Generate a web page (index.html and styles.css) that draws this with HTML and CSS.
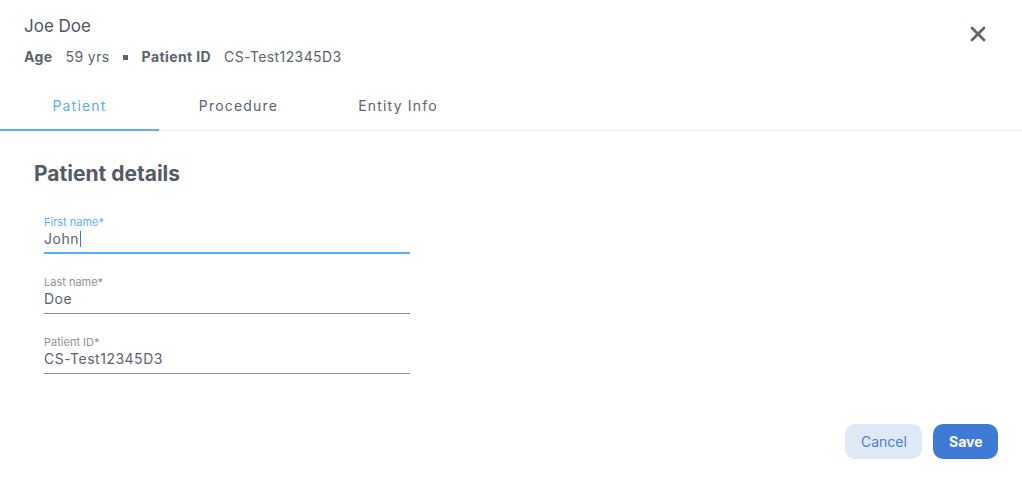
FILE: index.html
```html
<!DOCTYPE html>
<html lang="en">
<head>
<meta charset="utf-8">
<title>Patient</title>
<link rel="stylesheet" href="styles.css">
</head>
<body>
<div class="dialog">
  <header class="header">
    <div class="header-info">
      <div class="name">Joe Doe</div>
      <div class="meta">
        <span class="meta-label">Age</span>
        <span class="meta-value">59 yrs</span>
        <span class="bullet"></span>
        <span class="meta-label">Patient ID</span>
        <span class="meta-value">CS-Test12345D3</span>
      </div>
    </div>
    <button class="close" aria-label="Close">
      <svg width="16" height="16" viewBox="0 0 16 16"><path d="M2 2 L14 14 M14 2 L2 14" stroke="#5f6670" stroke-width="2.8" stroke-linecap="round" fill="none"/></svg>
    </button>
  </header>
  <nav class="tabs">
    <div class="tab active">Patient</div>
    <div class="tab">Procedure</div>
    <div class="tab">Entity Info</div>
  </nav>
  <main class="content">
    <h2 class="section-title">Patient details</h2>
    <div class="fields">
      <div class="field focused">
        <label class="field-label">First name*</label>
        <div class="field-value">John<span class="caret"></span></div>
      </div>
      <div class="field">
        <label class="field-label">Last name*</label>
        <div class="field-value">Doe</div>
      </div>
      <div class="field">
        <label class="field-label">Patient ID*</label>
        <div class="field-value">CS-Test12345D3</div>
      </div>
    </div>
  </main>
  <footer class="actions">
    <button class="btn btn-cancel">Cancel</button>
    <button class="btn btn-save">Save</button>
  </footer>
</div>
</body>
</html>
```
FILE: styles.css
```css
* { box-sizing: border-box; }
html, body { margin: 0; padding: 0; background: #fff; }
body {
  font-family: Inter, "Noto Sans", sans-serif;
  color: #5b636d;
  width: 1022px;
  height: 484px;
  overflow: hidden;
}
.dialog {
  display: flex;
  flex-direction: column;
  height: 484px;
}
.header {
  display: flex;
  justify-content: space-between;
  padding: 15px 36px 0 24px;
}
.name {
  font-size: 17px;
  line-height: 22px;
  color: #4f5660;
}
.meta {
  display: flex;
  align-items: center;
  margin-top: 11px;
  font-size: 14px;
  line-height: 18px;
  letter-spacing: 0.4px;
}
.meta-label { font-weight: 700; color: #5b636d; }
.meta-value { margin-left: 13px; color: #5b636d; }
.bullet {
  width: 5px;
  height: 5px;
  background: #5b636d;
  margin: 0 14px 0 13px;
}
.close {
  border: 0;
  background: none;
  padding: 0;
  margin-top: 11px;
  width: 16px;
  height: 16px;
  cursor: pointer;
}
.tabs {
  display: flex;
  margin-top: 25px;
  border-bottom: 1px solid #eeeeee;
}
.tab {
  width: 159px;
  text-align: center;
  font-size: 14px;
  letter-spacing: 1.2px;
  line-height: 18px;
  padding: 6px 0 14px;
  color: #5b636d;
  border-bottom: 2px solid transparent;
  margin-bottom: -1px;
}
.tab:nth-child(3) { width: 160px; }
.tab.active {
  color: #5aaef4;
  border-bottom-color: #5aaef4;
}
.content {
  padding: 30px 34px 0;
  flex: 1;
}
.section-title {
  margin: 0;
  font-size: 21px;
  line-height: 26px;
  font-weight: 700;
  color: #535b65;
}
.fields {
  display: flex;
  flex-direction: column;
  gap: 21px;
  margin: 28px 0 0 10px;
  width: 366px;
}
.field {
  display: flex;
  flex-direction: column;
  border-bottom: 1px solid #8a8d91;
  padding-bottom: 4px;
}
.field-label {
  font-size: 11px;
  line-height: 14px;
  color: #8f9296;
}
.field-value {
  font-size: 14px;
  line-height: 20px;
  color: #5b636d;
  letter-spacing: 0.5px;
  display: flex;
  align-items: center;
}
.field.focused { border-bottom: 2px solid #5aaef4; padding-bottom: 3px; }
.field.focused .field-label { color: #5aaef4; }
.caret {
  display: inline-block;
  width: 1px;
  height: 16px;
  background: #3a7bd5;
  margin-left: 1px;
}
.actions {
  display: flex;
  justify-content: flex-end;
  gap: 11px;
  padding: 0 24px 25px;
}
.btn {
  height: 35px;
  border: 0;
  border-radius: 10px;
  font-family: Inter, "Noto Sans", sans-serif;
  font-size: 14px;
  padding: 0 16px;
  cursor: pointer;
}
.btn-cancel {
  background: #dfe9f6;
  color: #4a82d4;
  width: 77px;
}
.btn-save {
  background: #3f7bd6;
  color: #ffffff;
  font-weight: 700;
  width: 65px;
}
```
